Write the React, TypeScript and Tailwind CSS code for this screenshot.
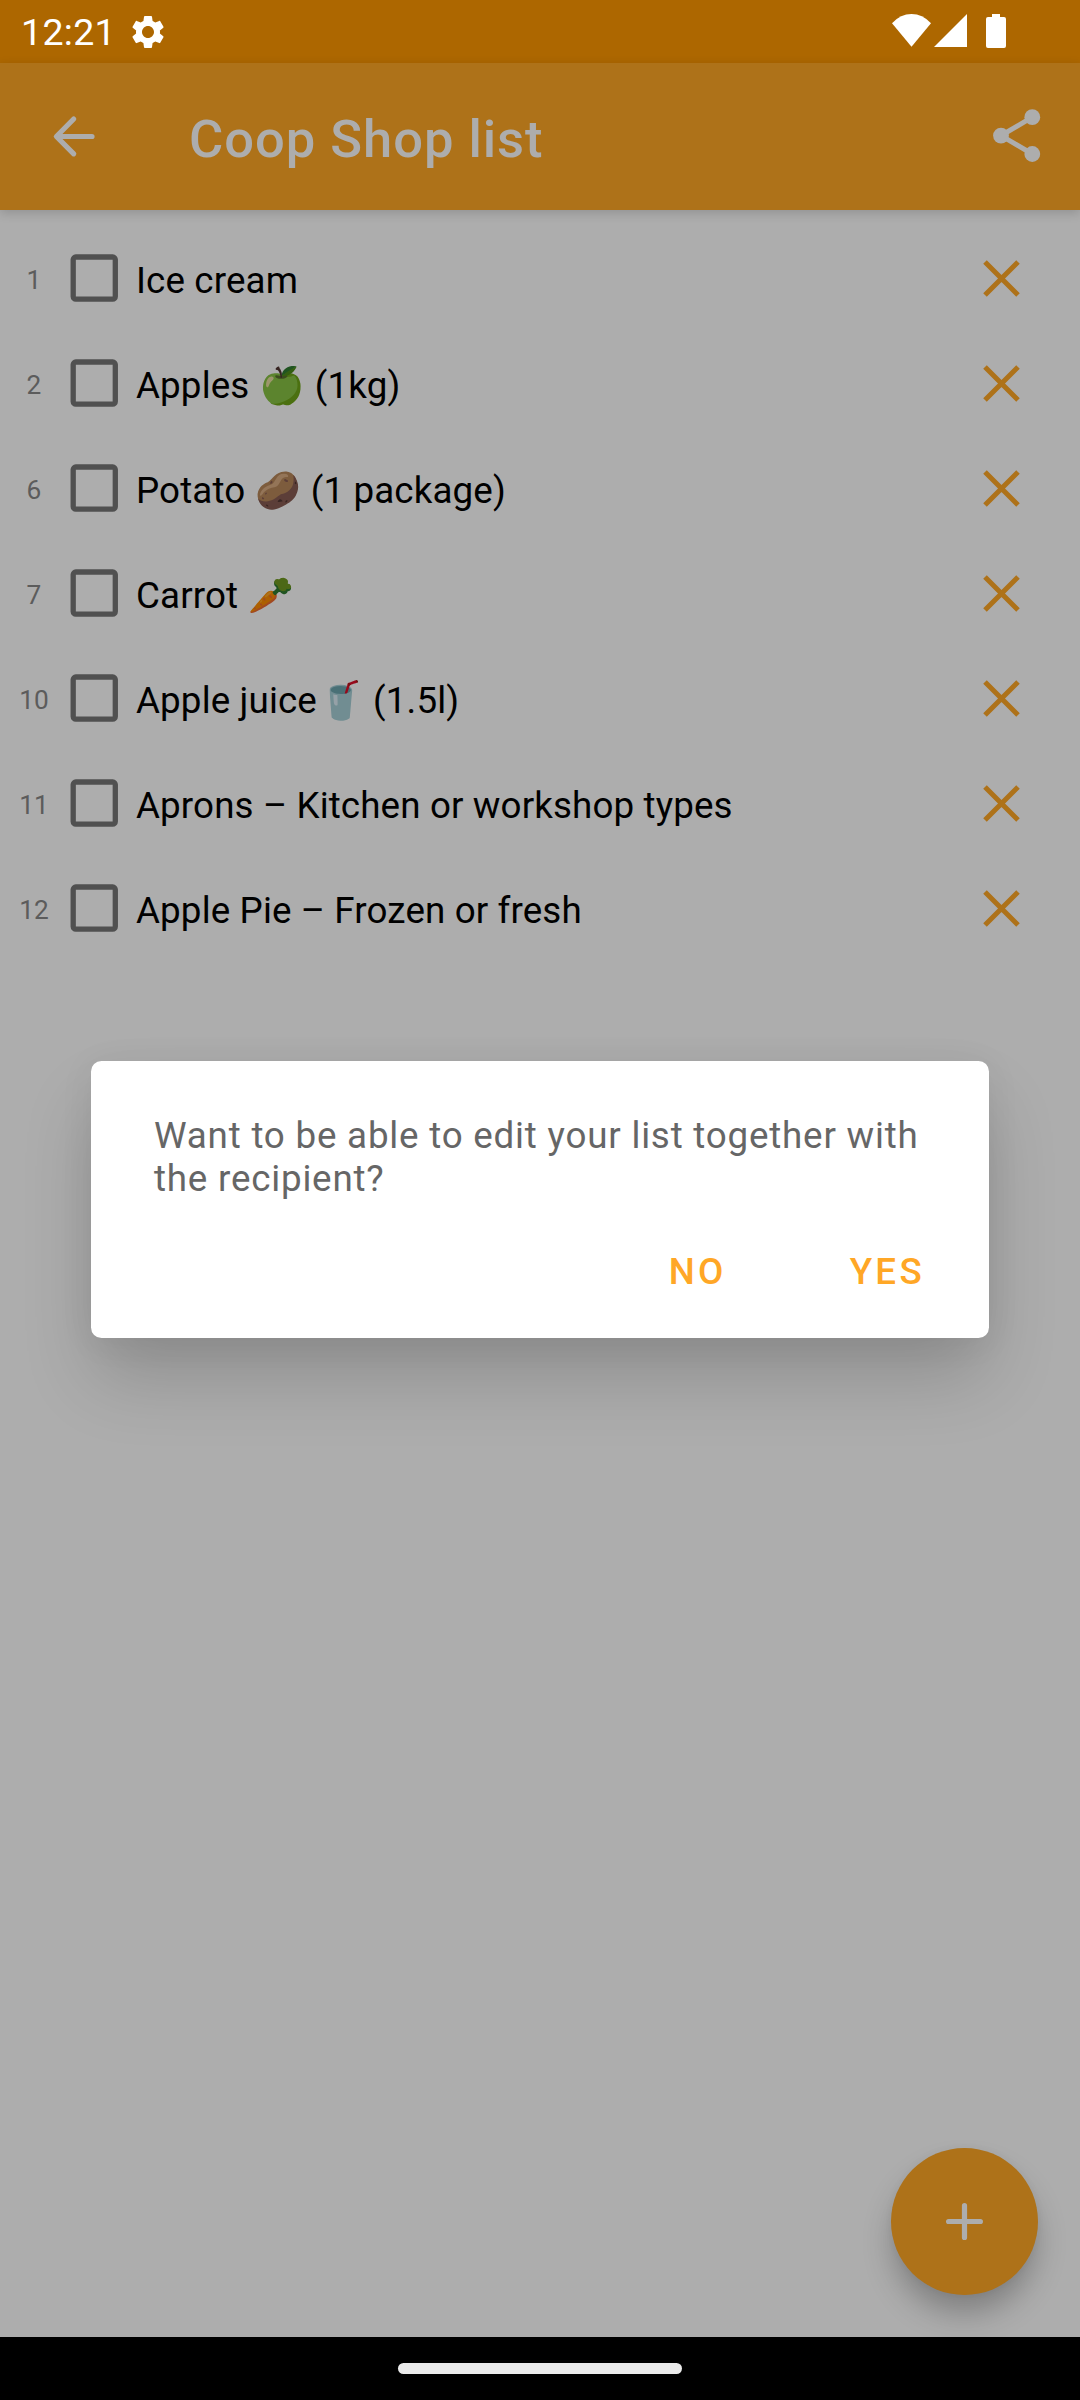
type Item = { n: number; before: string; emoji?: string; after?: string };

const items: Item[] = [
  { n: 1, before: "Ice cream" },
  { n: 2, before: "Apples ", emoji: "🍏", after: " (1kg)" },
  { n: 6, before: "Potato ", emoji: "🥔", after: " (1 package)" },
  { n: 7, before: "Carrot ", emoji: "🥕" },
  { n: 10, before: "Apple juice", emoji: "🥤", after: " (1.5l)" },
  { n: 11, before: "Aprons – Kitchen or workshop types" },
  { n: 12, before: "Apple Pie – Frozen or fresh" },
];

function StatusBar() {
  return (
    <div className="flex h-[63px] shrink-0 items-center bg-[#ad6700] text-white">
      <span className="ml-[21px] mt-[3px] w-[107px] text-[37.5px] leading-none tracking-[0.3px]">12:21</span>
      <svg className="h-[40px] w-[40px]" viewBox="0 0 24 24" fill="currentColor">
        <path d="M19.14 12.94c.04-.3.06-.61.06-.94 0-.32-.02-.64-.07-.94l2.03-1.58c.18-.14.23-.41.12-.61l-1.92-3.32c-.12-.22-.37-.29-.59-.22l-2.39.96c-.5-.38-1.03-.7-1.62-.94l-.36-2.54c-.04-.24-.24-.41-.48-.41h-3.84c-.24 0-.43.17-.47.41l-.36 2.54c-.59.24-1.13.57-1.62.94l-2.39-.96c-.22-.08-.47 0-.59.22L2.74 8.87c-.12.21-.08.47.12.61l2.03 1.58c-.05.3-.09.63-.09.94s.02.64.07.94l-2.03 1.58c-.18.14-.23.41-.12.61l1.92 3.32c.12.22.37.29.59.22l2.39-.96c.5.38 1.03.7 1.62.94l.36 2.54c.05.24.24.41.48.41h3.84c.24 0 .44-.17.47-.41l.36-2.54c.59-.24 1.13-.56 1.62-.94l2.39.96c.22.08.47 0 .59-.22l1.92-3.32c.12-.22.07-.47-.12-.61l-2.01-1.58zM12 15.6c-1.98 0-3.6-1.62-3.6-3.6s1.62-3.6 3.6-3.6 3.6 1.62 3.6 3.6-1.62 3.6-3.6 3.6z" />
      </svg>
      <svg className="ml-auto mr-[70px] h-[63px] w-[120px]" viewBox="890 0 120 63" fill="currentColor">
        <path d="M911.5 46.7 892 23.2Q900.5 14 911.5 14T931 23.2Z" />
        <path d="M934 47 967 14V47Z" />
        <path d="M992 14h8v3h4a2 2 0 0 1 2 2v27a2 2 0 0 1-2 2h-16a2 2 0 0 1-2-2V19a2 2 0 0 1 2-2h4Z" />
      </svg>
    </div>
  );
}

function Toolbar() {
  return (
    <header className="flex h-[147px] shrink-0 items-center bg-[#ae7219] text-[#adadad] shadow-[0_3px_10px_rgba(0,0,0,0.16)]">
      <svg className="ml-[42px] h-[63px] w-[63px]" viewBox="42 105 63 63" fill="none" stroke="currentColor" strokeWidth="5.2" strokeLinecap="round" strokeLinejoin="round">
        <path d="M92 136.5H57M73.7 119 56.4 136.5 73.7 153.8" />
      </svg>
      <h1 className="ml-[84px] mt-[5px] text-[52.5px] font-medium leading-none tracking-[0.97px]">Coop Shop list</h1>
      <svg className="ml-auto mr-[32px] h-[63px] w-[63px]" viewBox="985 105 63 63" fill="currentColor">
        <path d="M1032.3 117.2 1001 135.6 1032.3 154" fill="none" stroke="currentColor" strokeWidth="5" />
        <circle cx="1032.3" cy="117.2" r="7.9" />
        <circle cx="1001" cy="135.6" r="7.9" />
        <circle cx="1032.3" cy="154" r="7.9" />
      </svg>
    </header>
  );
}

function Row({ item }: { item: Item }) {
  return (
    <li className="flex h-[105px] items-center">
      <span className="w-[68px] text-center text-[26.25px] leading-none text-[#5c5c5c]">{item.n}</span>
      <svg className="mb-[5px] ml-px h-[50px] w-[50px]" viewBox="0 0 50 50" fill="none" stroke="#505050" strokeWidth="5.3">
        <rect x="4.2" y="4" width="42.1" height="42.1" rx="2.6" />
      </svg>
      <span className="ml-[17px] mt-[2px] whitespace-pre text-[36.75px] leading-none tracking-[0.13px] text-black">
        {item.before}
        {item.emoji && <span className="ml-px inline-block brightness-[0.68]">{item.emoji}</span>}
        {item.after}
      </span>
      <svg className="mb-[4px] ml-auto mr-[52px] h-[53px] w-[53px]" viewBox="0 0 53 53" fill="none" stroke="#ae7219" strokeWidth="5">
        <path d="M10 10 43 43M43 10 10 43" />
      </svg>
    </li>
  );
}

export default function App() {
  return (
    <div className="relative flex h-[2400px] w-[1080px] flex-col overflow-hidden bg-[#adadad] font-['Roboto','Noto_Color_Emoji',sans-serif]">
      <StatusBar />
      <Toolbar />
      <ul className="flex grow flex-col pt-[18px]">
        {items.map((item) => (
          <Row key={item.n} item={item} />
        ))}
      </ul>
      <button className="absolute bottom-[105px] right-[42px] flex h-[147px] w-[147px] items-center justify-center rounded-full bg-[#ae7219] shadow-[0_20px_30px_-2px_rgba(0,0,0,0.26),0_0_8px_rgba(0,0,0,0.04)]">
        <svg className="h-[41px] w-[41px]" viewBox="0 0 41 41" fill="none" stroke="#adadad" strokeWidth="5.2" strokeLinecap="round">
          <path d="M20.5 4.6V36.4M4.6 20.5H36.4" />
        </svg>
      </button>
      <nav className="relative flex h-[63px] shrink-0 items-center justify-center bg-black">
        <span className="h-[11px] w-[284px] rounded-full bg-[#ebebeb]" />
      </nav>
      <div className="absolute left-[91px] top-[1061px] flex h-[277px] w-[898px] flex-col rounded-[10.5px] bg-white shadow-[0_42px_72px_-4px_rgba(0,0,0,0.18),0_4px_36px_rgba(0,0,0,0.06)]">
        <p className="ml-[63px] mt-[53px] whitespace-pre text-[36.75px] leading-[43px] tracking-[0.79px] text-[#666]">
          {"Want to be able to edit your list together with\nthe recipient?"}
        </p>
        <div className="mt-[50px] flex justify-end text-[36.75px] font-medium leading-[43px] tracking-[3.3px] text-[#ffa726]">
          <button className="mr-[123px]">NO</button>
          <button className="mr-[64px]">YES</button>
        </div>
      </div>
    </div>
  );
}
